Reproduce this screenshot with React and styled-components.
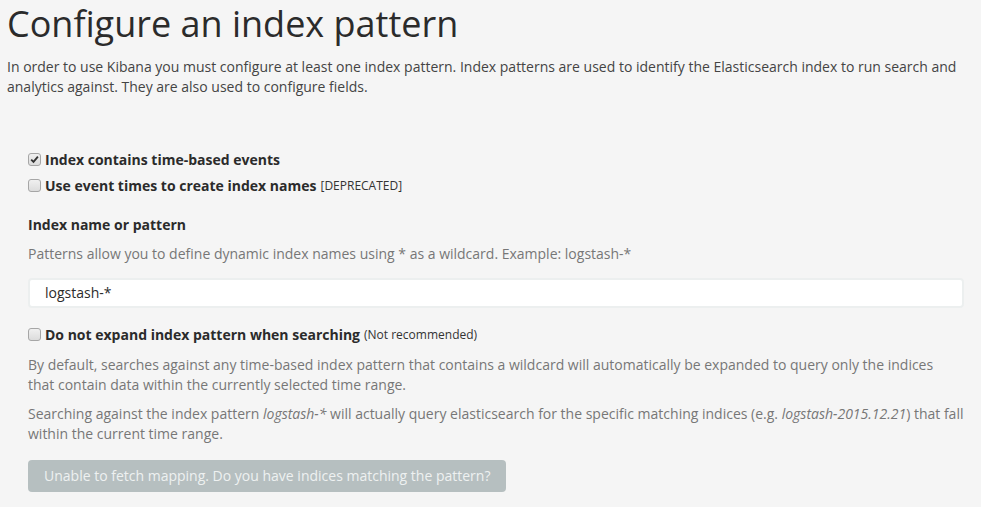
import React from "react";
import styled, { createGlobalStyle } from "styled-components";

const GlobalStyle = createGlobalStyle`
  body {
    margin: 0;
    background: #f5f5f5;
    font-family: "Open Sans", "Noto Sans", sans-serif;
    font-size: 14px;
    line-height: 20px;
    color: #444;
  }
`;

const Page = styled.div`
  padding: 4px 0 14px 7px;
`;

const Title = styled.h1`
  margin: 0 0 13px;
  font-size: 36px;
  font-weight: 400;
  line-height: 1.1;
  color: #2b2b2b;
`;

const Intro = styled.p`
  margin: 0;
  color: #444;
`;

const Form = styled.form`
  margin: 53px 17px 0 21px;
`;

const CheckRow = styled.label`
  display: flex;
  align-items: center;
  font-weight: 700;
  color: #2b2b2b;
  margin-top: ${(p) => p.$gap || 0}px;
  cursor: pointer;
`;

const Box = styled.span`
  box-sizing: border-box;
  display: flex;
  align-items: center;
  justify-content: center;
  flex: none;
  width: 13px;
  height: 13px;
  margin: 0 4px 1px 0;
  border: 1px solid #a6a6a6;
  border-radius: 3px;
  background: linear-gradient(#f0f0f0, #dcdcdc);
`;

const Note = styled.span`
  font-size: 12px;
  font-weight: 400;
  margin-left: 4px;
  color: #333;
`;

const FieldLabel = styled.div`
  margin-top: 19px;
  font-weight: 700;
  color: #2b2b2b;
`;

const Help = styled.p`
  margin: ${(p) => p.$gap}px 0 0;
  color: #777;
`;

const TextInput = styled.input`
  display: block;
  box-sizing: border-box;
  width: 100%;
  height: 30px;
  margin-top: 14px;
  padding: 0 15px;
  border: 2px solid #ecefef;
  border-radius: 4px;
  background: #fff;
  font-family: inherit;
  font-size: 14px;
  color: #2b2b2b;
  outline: none;
`;

const SubmitButton = styled.button`
  display: block;
  height: 32px;
  margin-top: 16px;
  padding: 0 16px;
  border: none;
  border-radius: 4px;
  background: #b6bfc0;
  color: #eef1f1;
  font-family: inherit;
  font-size: 14px;
  cursor: not-allowed;
`;

function Checkbox({ checked }) {
  return (
    <Box>
      {checked && (
        <svg width="9" height="9" viewBox="0 0 9 9">
          <path
            d="M1.2 4.6 L3.5 6.9 L7.9 1.6"
            fill="none"
            stroke="#333"
            strokeWidth="1.8"
          />
        </svg>
      )}
    </Box>
  );
}

export default function App() {
  return (
    <Page>
      <GlobalStyle />
      <Title>Configure an index pattern</Title>
      <Intro>
        In order to use Kibana you must configure at least one index pattern.
        Index patterns are used to identify the Elasticsearch index to run
        search and analytics against. They are also used to configure fields.
      </Intro>

      <Form onSubmit={(e) => e.preventDefault()}>
        <CheckRow>
          <Checkbox checked />
          Index contains time-based events
        </CheckRow>
        <CheckRow $gap={6}>
          <Checkbox />
          Use event times to create index names
          <Note>[DEPRECATED]</Note>
        </CheckRow>

        <FieldLabel>Index name or pattern</FieldLabel>
        <Help $gap={9}>
          Patterns allow you to define dynamic index names using * as a
          wildcard. Example: logstash-*
        </Help>
        <TextInput type="text" defaultValue="logstash-*" />

        <CheckRow $gap={17}>
          <Checkbox />
          Do not expand index pattern when searching
          <Note>(Not recommended)</Note>
        </CheckRow>
        <Help $gap={10}>
          By default, searches against any time-based index pattern that
          contains a wildcard will automatically be expanded to query only the
          indices
          <br />
          that contain data within the currently selected time range.
        </Help>
        <Help $gap={9}>
          Searching against the index pattern <em>logstash-*</em> will actually
          query elasticsearch for the specific matching indices (e.g.{" "}
          <em>logstash-2015.12.21</em>) that fall within the current time range.
        </Help>

        <SubmitButton type="submit" disabled>
          Unable to fetch mapping. Do you have indices matching the pattern?
        </SubmitButton>
      </Form>
    </Page>
  );
}
